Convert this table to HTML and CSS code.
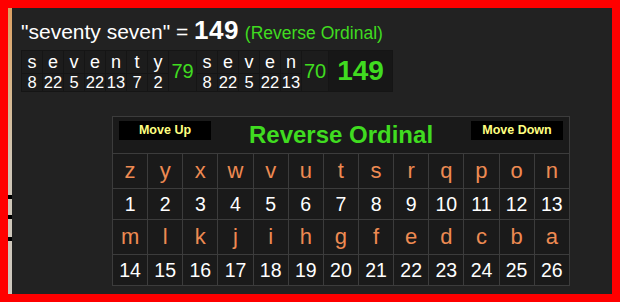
FILE: index.html
```html
<!DOCTYPE html>
<html lang="en">
<head>
<meta charset="utf-8">
<title>Reverse Ordinal</title>
<link rel="stylesheet" href="styles.css">
</head>
<body>
<div class="rail">
  <span class="mark mark-1"></span>
  <span class="mark mark-2"></span>
  <span class="mark mark-3"></span>
</div>
<main class="content">
  <h1 class="phrase">"seventy seven" = <b class="total">149</b> <span class="cipher">(Reverse Ordinal)</span></h1>
  <table class="breakdown">
    <tr>
      <td class="ch">s</td><td class="ch">e</td><td class="ch">v</td><td class="ch">e</td><td class="ch">n</td><td class="ch">t</td><td class="ch">y</td>
      <td class="wsum w1" rowspan="2">79</td>
      <td class="ch">s</td><td class="ch">e</td><td class="ch">v</td><td class="ch">e</td><td class="ch">n</td>
      <td class="wsum w2" rowspan="2">70</td>
      <td class="gsum" rowspan="2">149</td>
    </tr>
    <tr>
      <td class="nv">8</td><td class="nv">22</td><td class="nv">5</td><td class="nv">22</td><td class="nv">13</td><td class="nv">7</td><td class="nv">2</td>
      <td class="nv">8</td><td class="nv">22</td><td class="nv">5</td><td class="nv">22</td><td class="nv">13</td>
    </tr>
  </table>
  <table class="chart">
    <tr>
      <th class="chart-head" colspan="13">
        <div class="head-bar">
          <button class="move">Move Up</button>
          <span class="chart-title">Reverse Ordinal</span>
          <button class="move">Move Down</button>
        </div>
      </th>
    </tr>
    <tr class="letters">
      <td>z</td><td>y</td><td>x</td><td>w</td><td>v</td><td>u</td><td>t</td><td>s</td><td>r</td><td>q</td><td>p</td><td>o</td><td>n</td>
    </tr>
    <tr class="numbers">
      <td>1</td><td>2</td><td>3</td><td>4</td><td>5</td><td>6</td><td>7</td><td>8</td><td>9</td><td>10</td><td>11</td><td>12</td><td>13</td>
    </tr>
    <tr class="letters">
      <td>m</td><td>l</td><td>k</td><td>j</td><td>i</td><td>h</td><td>g</td><td>f</td><td>e</td><td>d</td><td>c</td><td>b</td><td>a</td>
    </tr>
    <tr class="numbers">
      <td>14</td><td>15</td><td>16</td><td>17</td><td>18</td><td>19</td><td>20</td><td>21</td><td>22</td><td>23</td><td>24</td><td>25</td><td>26</td>
    </tr>
  </table>
</main>
</body>
</html>
```

FILE: styles.css
```css
html {
  background: #ff0000;
  height: 100%;
}
body {
  margin: 8px;
  height: 286px;
  background: #222222;
  display: flex;
  overflow: hidden;
  font-family: "Liberation Sans", Arial, sans-serif;
  color: #ffffff;
}
.rail {
  width: 4px;
  flex: none;
  display: flex;
  flex-direction: column;
  background: linear-gradient(180deg, #dca062 0%, #d8b588 25%, #cfc6b6 55%, #cdc8bf 100%);
}
.mark {
  display: block;
  height: 4px;
  background: #000;
}
.mark-1 { margin-top: 187px; }
.mark-2 { margin-top: 16px; }
.mark-3 { margin-top: 18px; }

.content {
  flex: 1;
  padding: 9px 0 0 9px;
}
.phrase {
  margin: 0;
  height: 29px;
  font-size: 21px;
  font-weight: normal;
  line-height: 29px;
  color: #ffffff;
  white-space: nowrap;
}
.total {
  font-size: 26px;
  font-weight: bold;
  line-height: 1;
  letter-spacing: 0.5px;
}
.cipher {
  font-size: 17.5px;
  color: #40dc20;
}

.breakdown {
  margin-top: 4px;
  border-collapse: separate;
  border-spacing: 1px;
  background: #151515;
}
.breakdown td {
  background: #1c1c1c;
  text-align: center;
  padding: 0;
}
.breakdown .ch {
  width: 20px;
  height: 22px;
  font-size: 18px;
  line-height: 22px;
  color: #ffffff;
}
.breakdown .nv {
  height: 17px;
  font-size: 16.5px;
  line-height: 17px;
  color: #ffffff;
}
.breakdown .wsum {
  font-size: 20px;
  line-height: 1;
  color: #40dc20;
}
.breakdown .w1 { width: 27px; }
.breakdown .w2 { width: 26px; }
.breakdown .gsum {
  width: 63px;
  background: #171717;
  font-size: 28px;
  line-height: 1;
  font-weight: bold;
  color: #40dc20;
}

.chart {
  margin: 24px 0 0 91px;
  width: 458px;
  table-layout: fixed;
  border-collapse: collapse;
  border: 1px solid #3c3c3c;
  background: #1a1a1a;
}
.chart td,
.chart th {
  border: 1px solid #3c3c3c;
  padding: 0;
  text-align: center;
}
.chart-head {
  padding: 4px 6px 4px 6px !important;
}
.head-bar {
  display: flex;
  justify-content: space-between;
  align-items: flex-start;
}
.move {
  width: 92px;
  height: 19px;
  margin: 0;
  padding: 0;
  border: 0;
  background: #000000;
  color: #ffff80;
  font-family: "Liberation Sans", Arial, sans-serif;
  font-size: 12.5px;
  font-weight: bold;
  line-height: 19px;
}
.chart-title {
  font-size: 24px;
  font-weight: bold;
  color: #40dc20;
  line-height: 28px;
}
.letters td {
  height: 34px;
  font-size: 22px;
  color: #ee8a52;
}
.numbers td {
  height: 30px;
  font-size: 19.5px;
  color: #ffffff;
}
```
